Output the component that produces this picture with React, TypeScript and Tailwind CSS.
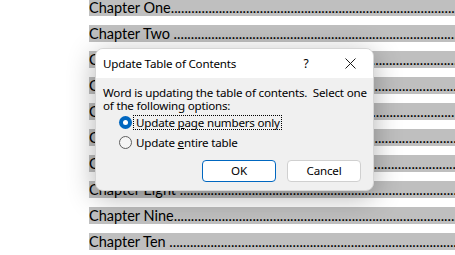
const chapters = [
  "Chapter One",
  "Chapter Two ",
  "Chapter Three ",
  "Chapter Four ",
  "Chapter Five ",
  "Chapter Six ",
  "Chapter Seven ",
  "Chapter Eight ",
  "Chapter Nine",
  "Chapter Ten ",
];

const leader = ".".repeat(160);

function RadioOption({ checked, children }: { checked?: boolean; children: React.ReactNode }) {
  return (
    <div className="flex items-center gap-[1px]">
      {checked ? (
        <span className="flex h-[13px] w-[13px] items-center justify-center rounded-full bg-[#0067c0]">
          <span className="h-[5px] w-[5px] rounded-full bg-white" />
        </span>
      ) : (
        <span className="h-[13px] w-[13px] rounded-full border border-[#5f5f5f] bg-[#f5f5f5]" />
      )}
      <span
        className={
          checked
            ? "border border-dotted border-black pl-[2px] pr-[1px] leading-[13px]"
            : "border border-transparent pl-[2px] pr-[1px] leading-[13px]"
        }
      >
        {children}
      </span>
    </div>
  );
}

export default function App() {
  return (
    <div className="relative h-[255px] w-[455px] overflow-hidden bg-white">
      <div className="-mt-px flex flex-col gap-[9px] pl-[89px] font-['Lato',sans-serif] text-[14.5px] text-black">
        {chapters.map((c) => (
          <div key={c} className="h-[17px] overflow-hidden whitespace-nowrap bg-[#bfbfbf] leading-[17px]">
            {c}
            {leader}
          </div>
        ))}
      </div>

      <div className="absolute left-[95px] top-[48px] flex h-[143px] w-[279px] flex-col overflow-hidden rounded-[8px] border border-[#d6d6d6] bg-[#f0f0f0] font-['Noto_Sans',sans-serif] text-[11.6px] tracking-[-0.2px] text-black shadow-[0_6px_28px_rgba(0,0,0,0.3)]">
        <div className="flex h-[29px] items-center bg-white pl-[7px]">
          <span className="flex-1">Update Table of Contents</span>
          <span className="w-[12px] text-center text-[12px]">?</span>
          <svg className="ml-[33px] mr-[17px]" width="11" height="11" viewBox="0 0 11 11">
            <path d="M0.5 0.5L10.5 10.5M10.5 0.5L0.5 10.5" stroke="#1a1a1a" strokeWidth="1" />
          </svg>
        </div>
        <div className="flex flex-1 flex-col pl-[7px] pr-[2px] pt-[9px]">
          <p className="leading-[12.5px]">
            Word is updating the table of contents.&nbsp; Select one of the following options:
          </p>
          <div className="mt-[3px] flex flex-col gap-[5px] pl-[16px]">
            <RadioOption checked>
              Update <u>p</u>age numbers only
            </RadioOption>
            <RadioOption>
              Update <u>e</u>ntire table
            </RadioOption>
          </div>
          <div className="mt-[10px] flex justify-end gap-[11px] pr-[10px]">
            <button className="h-[22px] w-[74px] rounded-[4px] border border-[#0067c0] bg-white">OK</button>
            <button className="h-[22px] w-[74px] rounded-[4px] border border-[#d0d0d0] bg-white">Cancel</button>
          </div>
        </div>
      </div>
    </div>
  );
}
